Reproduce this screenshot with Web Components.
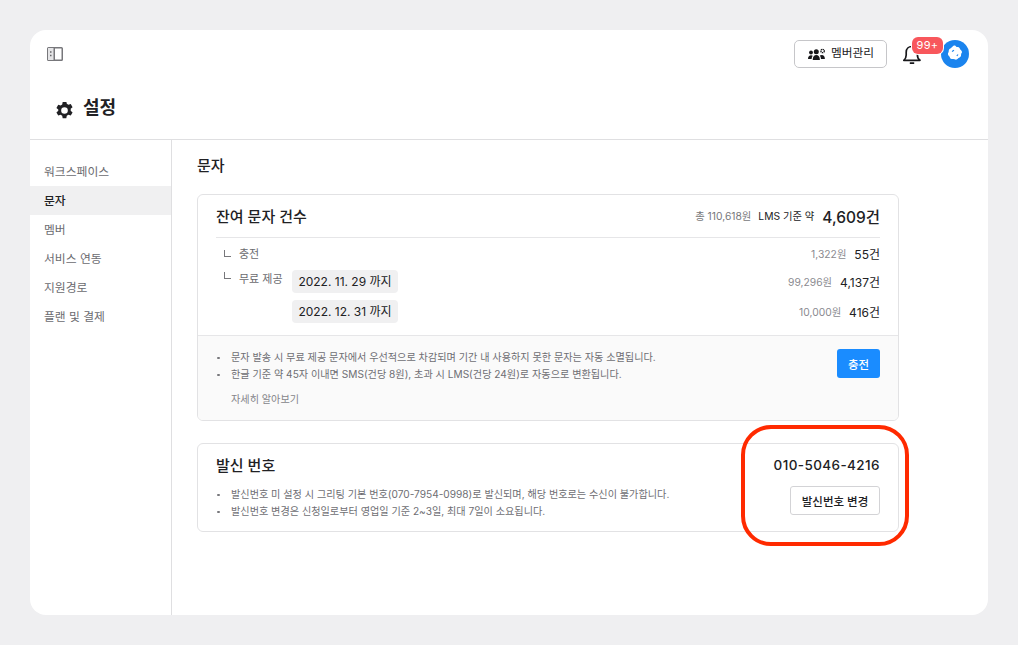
<!DOCTYPE html>
<html lang="ko">
<head>
<meta charset="utf-8">
<title>설정</title>
<style>
  html, body { margin: 0; height: 100%; }
  body {
    background: #efeff1;
    font-family: Inter, "Noto Sans CJK KR", sans-serif;
    color: #212124;
  }
</style>
</head>
<body>
<app-shell>
  <top-bar slot="top"></top-bar>
  <page-title slot="title">설정</page-title>
  <side-nav slot="side"></side-nav>
  <sms-balance></sms-balance>
  <sender-number></sender-number>
</app-shell>
<script>
class AppShell extends HTMLElement {
  constructor() {
    super();
    this.attachShadow({ mode: 'open' });
    this.shadowRoot.innerHTML = `
      <style>
        :host { display: block; padding: 30px; box-sizing: border-box; height: 645px; }
        .card {
          position: relative;
          width: 958px;
          height: 585px;
          background: #fff;
          border-radius: 16px;
          overflow: hidden;
          display: flex;
          flex-direction: column;
        }
        .head { border-bottom: 1px solid #dfdfe1; height: 110px; box-sizing: border-box; flex: none; }
        .body { display: flex; flex: 1; min-height: 0; }
        .side { width: 141px; flex: none; border-right: 1px solid #dfdfe1; }
        .main { flex: 1; padding: 0 89px 0 25px; }
        h2 { margin: 0; font-size: 15px; line-height: 20px; font-weight: 500; padding: 16px 0 18px; color: #212124; }
        .stack { display: flex; flex-direction: column; gap: 22px; }
        .mark {
          position: absolute;
          left: 711px;
          top: 395px;
          width: 168px;
          height: 121px;
          box-sizing: border-box;
          border: 4px solid #ff2a00;
          border-radius: 30px;
        }
      </style>
      <div class="card">
        <div class="head">
          <slot name="top"></slot>
          <slot name="title"></slot>
        </div>
        <div class="body">
          <div class="side"><slot name="side"></slot></div>
          <div class="main">
            <h2>문자</h2>
            <div class="stack"><slot></slot></div>
          </div>
        </div>
        <div class="mark"></div>
      </div>
    `;
  }
}

class TopBar extends HTMLElement {
  constructor() {
    super();
    this.attachShadow({ mode: 'open' });
    this.shadowRoot.innerHTML = `
      <style>
        :host { display: flex; align-items: center; justify-content: space-between; height: 48px; padding: 0 19px 0 17px; }
        svg { display: block; }
        .right { display: flex; align-items: center; }
        .members {
          display: flex; align-items: center; gap: 5px;
          height: 28px; width: 93px; box-sizing: border-box;
          justify-content: center;
          border: 1px solid #c6c6c9; border-radius: 5px; background: #fff;
          font: 400 11.700px/1 Inter, "Noto Sans CJK KR", sans-serif; color: #212124;
          padding: 0 0 0 1px; margin-right: 15px;
        }
        .bell { position: relative; width: 22px; height: 24px; margin-right: 17px; }
        .badge {
          position: absolute; left: 10px; top: -5px;
          width: 31px; height: 17px; border-radius: 6px;
          background: #f8575c; color: #fff;
          box-shadow: 0 0 0 1px #fff;
          font-size: 11px; line-height: 17px; text-align: center; letter-spacing: .3px;
          z-index: 1;
        }
        .avatar {
          width: 28px; height: 28px; border-radius: 50%; background: #1b84ee;
          display: flex; align-items: center; justify-content: center;
        }
      </style>
      <svg width="16" height="14" viewBox="0 0 16 14" fill="none">
        <rect x=".75" y=".75" width="14.500" height="12.500" rx=".8" stroke="#77777b" stroke-width="1.500"/>
        <rect x="1" y="1" width="6" height="12" fill="#e4e4e6"/>
        <path d="M7.250 1v12" stroke="#77777b" stroke-width="1.500"/>
        <path d="M3 5h1.500M3 8.500h1.500" stroke="#66666a" stroke-width="1.500"/>
      </svg>
      <div class="right">
        <button class="members">
          <svg width="18" height="13" viewBox="0 0 18 13" fill="#17171a">
            <circle cx="3" cy="4.500" r="1.900"/><circle cx="8.300" cy="3.700" r="2.500"/>
            <circle cx="14.600" cy="3" r="1.700" fill="none" stroke="#17171a" stroke-width="1.300" stroke-dasharray="1.300 .5"/>
            <path d="M0 11c0-2.400 1.300-3.700 3.100-3.700.7 0 1.200.2 1.600.5C4 8.800 3.700 9.900 3.600 11H0zM4.700 12c0-3.300 1.500-5 3.600-5s3.600 1.700 3.600 5H4.700zM13 11c-.1-1.300-.5-2.500-1.200-3.400.6-.5 1.300-.7 2-.7 1.800 0 3.100 1.400 3.100 4.100H13z"/>
          </svg>
          멤버관리
        </button>
        <div class="bell">
          <svg width="20" height="22" viewBox="0 0 20 22" fill="none" stroke="#17171a" stroke-width="1.700" stroke-linejoin="round" style="margin-top:2px">
            <path d="M1.800 16.300c1.500-1.200 2.400-2.700 2.400-5.300V8.200C4.200 5 6.600 2.500 9.800 2.500s5.600 2.500 5.600 5.700V11c0 2.600.9 4.100 2.600 5.300H1.800z"/>
            <path d="M7.800 19.200h4.400" stroke-width="1.800"/>
          </svg>
          <span class="badge">99+</span>
        </div>
        <div class="avatar">
          <svg width="20" height="20" viewBox="0 0 20 20" fill="#fff">
            <path d="M8.500 1.800c1.200-.7 2.400.1 3 1.200 1.300-.4 3.200.2 3.400 1.700.2 1 2.100 1.700 2.100 3.300 0 1-1 1.500-.9 2.600.1 1.500-.6 3-2 3.200-.8.100-1.300 1.300-2.400 1.700-1.400.5-2.300-.5-3.500-.4-1.600.1-3.100-.4-3.400-1.900-.2-.9-1.600-1.500-1.800-2.700-.3-1.300.7-1.900.7-2.900C3.600 6.300 4 5 5.300 4.400c1-.4 2-1.900 3.200-2.600z"/>
            <path d="M7 7.500l2-1.200M11.800 12l1.200-1.500" stroke="#1b84ee" stroke-width="1.200" fill="none"/>
          </svg>
        </div>
      </div>
    `;
  }
}

class PageTitle extends HTMLElement {
  constructor() {
    super();
    this.attachShadow({ mode: 'open' });
    this.shadowRoot.innerHTML = `
      <style>
        :host { display: flex; align-items: center; gap: 9px; padding: 16px 0 0 25px; font-size: 18px; line-height: 28px; font-weight: 700; color: #212124; }
        svg { display: block; margin-top: 4px; }
      </style>
      <svg width="19" height="19" viewBox="0 0 24 24" fill="#212124">
        <path fill-rule="evenodd" d="M14.300 0.500l.6 3.100c.7.300 1.400.7 2 1.200l3-1 2.300 4-2.400 2.100c.1.400.1.800.1 1.200s0 .8-.1 1.200l2.400 2.100-2.300 4-3-1c-.6.500-1.300.9-2 1.200l-.6 3.100H9.700l-.6-3.100c-.7-.3-1.400-.7-2-1.200l-3 1-2.300-4 2.400-2.100C4.100 12.800 4.100 12.400 4.100 12s0-.8.100-1.200L1.800 8.700l2.300-4 3 1c.6-.5 1.300-.9 2-1.200l.6-3.100h4.600zM12 7.800a4.200 4.200 0 100 8.400 4.200 4.200 0 000-8.400z"/>
      </svg>
      <span><slot></slot></span>
    `;
  }
}

class SideNav extends HTMLElement {
  constructor() {
    super();
    this.attachShadow({ mode: 'open' });
    const items = ['워크스페이스', '문자', '멤버', '서비스 연동', '지원경로', '플랜 및 결제'];
    this.shadowRoot.innerHTML = `
      <style>
        :host { display: block; padding-top: 17px; }
        div { height: 29px; line-height: 30px; padding-left: 14px; font-size: 11.800px; font-weight: 400; color: #6b6b70; white-space: nowrap; }
        .on { background: #f0f0f1; color: #212124; font-weight: 500; }
      </style>
      ${items.map(t => `<div class="${t === '문자' ? 'on' : ''}">${t}</div>`).join('')}
    `;
  }
}

const cardCss = `
  :host { display: block; width: 702px; box-sizing: border-box; border: 1px solid #e2e2e4; border-radius: 6px; background: #fff; overflow: hidden; }
  ul { margin: 0; padding: 0 0 0 18px; font-size: 10.150px; line-height: 17px; color: #6e6e73; list-style: none; }
  li { position: relative; padding-left: 15px; white-space: nowrap; }
  li::before { content: ''; position: absolute; left: 1px; top: 7.500px; width: 2.500px; height: 2.500px; border-radius: 50%; background: #77777b; }
`;

class SmsBalance extends HTMLElement {
  constructor() {
    super();
    this.attachShadow({ mode: 'open' });
    this.shadowRoot.innerHTML = `
      <style>
        ${cardCss}
        :host { height: 227px; }
        .inner { padding: 0 18px; }
        .head { display: flex; align-items: center; justify-content: space-between; height: 43px; border-bottom: 1px solid #e6e6e8; padding-bottom: 1px; box-sizing: border-box; }
        h3 { margin: 0; font-size: 15px; font-weight: 500; color: #212124; }
        .sum { display: flex; align-items: center; }
        .sum small { font-size: 10.300px; color: #77777b; margin-right: 7px; }
        .sum span { font-size: 10.300px; color: #212124; margin-right: 8px; }
        .sum b { font-size: 15.500px; font-weight: 500; color: #212124; }
        .rows { height: 97px; box-sizing: border-box; }
        .row { display: flex; align-items: center; height: 30px; font-size: 11px; }
        .row.first { height: 29px; margin-bottom: -1px; padding-top: 1px; box-sizing: border-box; }
        .name { display: flex; align-items: center; color: #6b6b70; width: 76px; flex: none; }
        .name i { width: 6px; height: 6px; border-left: 1px solid #77777b; border-bottom: 1px solid #77777b; margin: 0 8px 0 8px; }
        .name.up { align-self: flex-start; padding-top: 4px; }
        .name.up i { margin-top: -6px; }
        .chip { background: #f0f0f1; border-radius: 4px; height: 23px; line-height: 23px; width: 106px; box-sizing: border-box; text-align: center; font-size: 12px; color: #212124; white-space: nowrap; }
        .val { margin-left: auto; display: flex; align-items: center; }
        .val small { font-size: 10.300px; color: #8a8a8f; margin-right: 8px; }
        .val span { font-size: 12px; color: #212124; }
        .foot { position: relative; border-top: 1px solid #e6e6e8; background: #fafafa; height: 86px; padding-top: 13px; box-sizing: border-box; }
        .more { font-size: 10.150px; line-height: 14px; color: #85858a; padding: 9px 0 0 33px; }
        button {
          position: absolute; right: 18px; top: 13px; width: 43px; height: 29px;
          background: #1a8cff; color: #fff; border: 0; border-radius: 3px;
          font: 500 11.500px Inter, "Noto Sans CJK KR", sans-serif; padding: 0;
        }
      </style>
      <div class="inner">
        <div class="head">
          <h3>잔여 문자 건수</h3>
          <div class="sum"><small>총 110,618원</small><span>LMS 기준 약</span><b>4,609건</b></div>
        </div>
        <div class="rows">
          <div class="row first">
            <div class="name"><i></i>충전</div>
            <div class="val"><small>1,322원</small><span>55건</span></div>
          </div>
          <div class="row">
            <div class="name up"><i></i>무료 제공</div>
            <div class="chip">2022. 11. 29 까지</div>
            <div class="val"><small>99,296원</small><span>4,137건</span></div>
          </div>
          <div class="row">
            <div class="name"></div>
            <div class="chip">2022. 12. 31 까지</div>
            <div class="val"><small>10,000원</small><span>416건</span></div>
          </div>
        </div>
      </div>
      <div class="foot">
        <ul>
          <li>문자 발송 시 무료 제공 문자에서 우선적으로 차감되며 기간 내 사용하지 못한 문자는 자동 소멸됩니다.</li>
          <li>한글 기준 약 45자 이내면 SMS(건당 8원), 초과 시 LMS(건당 24원)로 자동으로 변환됩니다.</li>
        </ul>
        <div class="more">자세히 알아보기</div>
        <button>충전</button>
      </div>
    `;
  }
}

class SenderNumber extends HTMLElement {
  constructor() {
    super();
    this.attachShadow({ mode: 'open' });
    this.shadowRoot.innerHTML = `
      <style>
        ${cardCss}
        :host { height: 89px; }
        .wrap { display: flex; justify-content: space-between; padding-right: 18px; height: 100%; }
        h3 { margin: 0; padding: 11px 0 9px 18px; font-size: 15px; line-height: 22px; font-weight: 500; color: #212124; }
        .side { display: flex; flex-direction: column; align-items: flex-end; }
        .num { font-size: 13.500px; line-height: 20px; font-weight: 500; padding-top: 11px; color: #212124; letter-spacing: .4px; }
        button {
          margin-top: 11px; width: 90px; height: 29px; background: #fff; color: #212124;
          border: 1px solid #d3d3d6; border-radius: 3px;
          font: 500 11.500px Inter, "Noto Sans CJK KR", sans-serif; padding: 0;
        }
      </style>
      <div class="wrap">
        <div>
          <h3>발신 번호</h3>
          <ul>
            <li>발신번호 미 설정 시 그리팅 기본 번호(070-7954-0998)로 발신되며, 해당 번호로는 수신이 불가합니다.</li>
            <li>발신번호 변경은 신청일로부터 영업일 기준 2~3일, 최대 7일이 소요됩니다.</li>
          </ul>
        </div>
        <div class="side">
          <div class="num">010-5046-4216</div>
          <button>발신번호 변경</button>
        </div>
      </div>
    `;
  }
}

customElements.define('app-shell', AppShell);
customElements.define('top-bar', TopBar);
customElements.define('page-title', PageTitle);
customElements.define('side-nav', SideNav);
customElements.define('sms-balance', SmsBalance);
customElements.define('sender-number', SenderNumber);
</script>
</body>
</html>
